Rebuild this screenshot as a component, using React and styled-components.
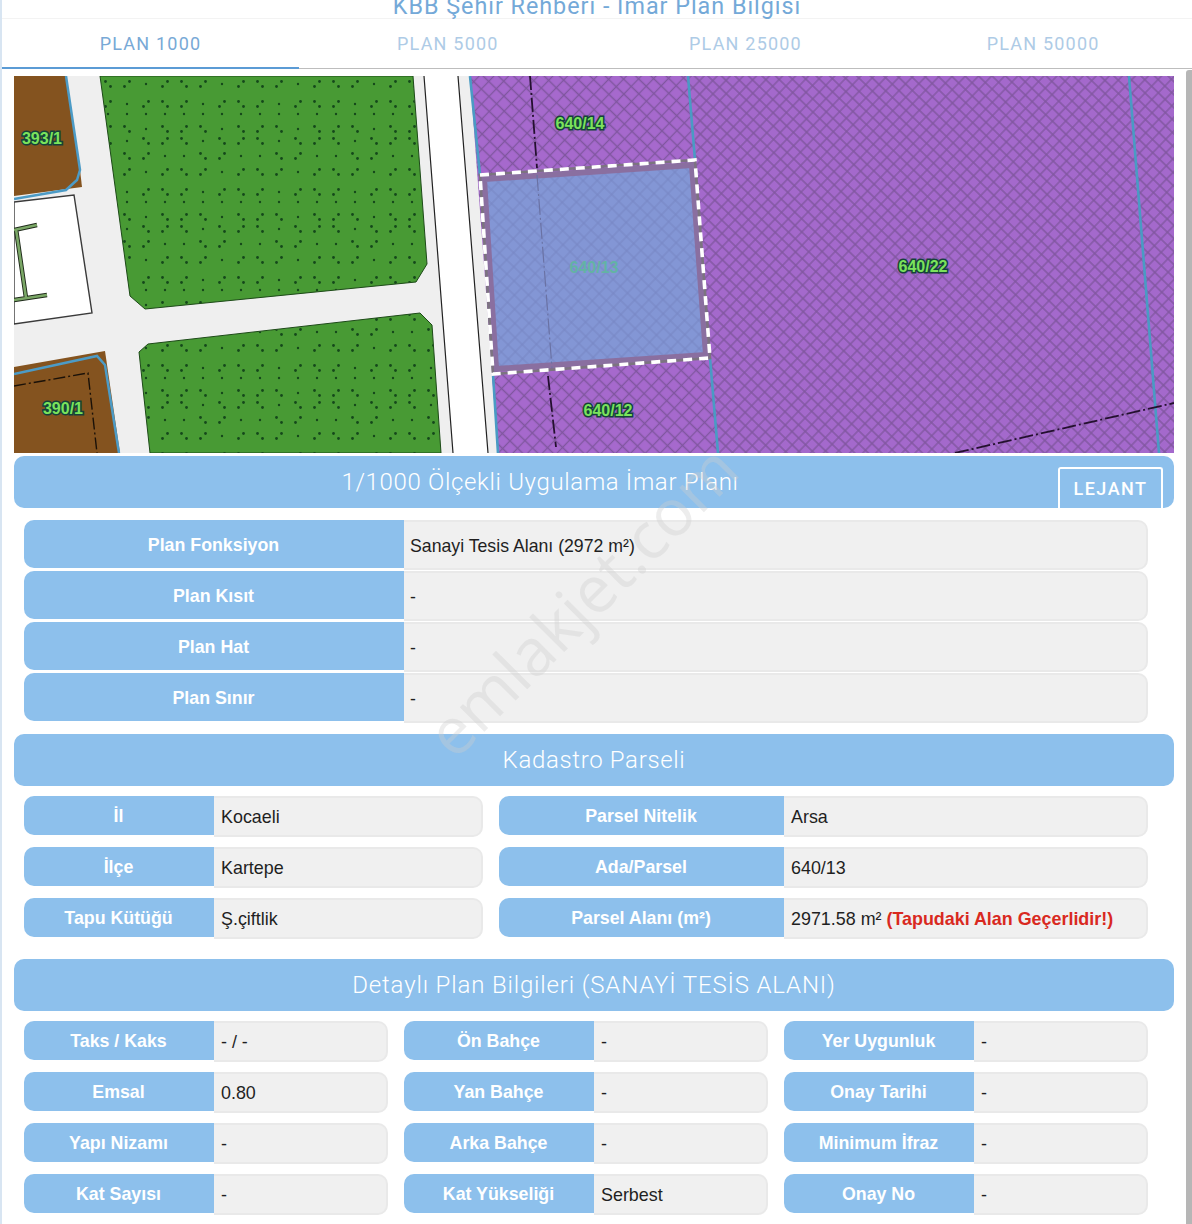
import React from 'react';
import styled, { createGlobalStyle } from 'styled-components';

const GlobalStyle = createGlobalStyle`
  html, body {
    margin: 0;
    padding: 0;
    background: #ffffff;
    overflow: hidden;
  }
`;

const Page = styled.div`
  position: relative;
  width: 1192px;
  height: 1224px;
  box-sizing: border-box;
  overflow: hidden;
  background: #ffffff;
  border-left: 2px solid #d8e5f2;
`;

const Title = styled.h1`
  margin: -7px 0 0 0;
  height: 25px;
  text-align: center;
  font: 400 23.3px/26px Roboto, sans-serif;
  letter-spacing: 1px;
  color: #74a9d8;
  border-bottom: 1px solid #f3f3f3;
  box-sizing: content-box;
`;

const Tabs = styled.div`
  display: grid;
  grid-template-columns: 297px repeat(3, 297.67px);
  height: 49px;
  border-bottom: 1px solid #bdbdbd;
`;

const Tab = styled.div`
  display: flex;
  align-items: center;
  justify-content: center;
  box-sizing: border-box;
  height: 50px;
  font: 400 18px Roboto, sans-serif;
  letter-spacing: 1.2px;
  color: ${props => (props.$active ? '#78a9d6' : '#aecbe6')};
  border-bottom: 2px solid ${props => (props.$active ? '#5b9bd5' : 'transparent')};
`;

const Content = styled.div`
  width: 1160px;
  margin: 7px 0 0 12px;
`;

const MapFrame = styled.svg`
  display: block;
  width: 1160px;
  height: 377px;
`;

const SectionHeader = styled.div`
  position: relative;
  display: flex;
  align-items: center;
  justify-content: center;
  box-sizing: border-box;
  height: 52px;
  margin-top: ${props => props.$top}px;
  padding: 0 ${props => props.$reserve || 0}px 0 0;
  border-radius: 10px;
  background: #8dc0ec;
  color: #ffffff;
  font: 300 24px Roboto, sans-serif;
  letter-spacing: ${props => props.$spacing || 0.66}px;
`;

const LegendButton = styled.div`
  position: absolute;
  right: 11px;
  bottom: 0;
  width: 105px;
  height: 41px;
  box-sizing: border-box;
  display: flex;
  align-items: center;
  justify-content: center;
  border: 2px solid #ffffff;
  border-bottom: none;
  border-radius: 3px 3px 0 0;
  font: 500 18px Roboto, sans-serif;
  letter-spacing: 1.5px;
`;

const FullRows = styled.div`
  display: flex;
  flex-direction: column;
  gap: 1px;
  width: 1124px;
  margin: 12px 0 0 10px;
`;

const Grid = styled.div`
  display: grid;
  grid-template-columns: ${props => props.$columns};
  column-gap: 16px;
  row-gap: 10px;
  width: 1124px;
  margin: 10px 0 0 10px;
`;

const Field = styled.div`
  display: flex;
  align-items: flex-start;
  height: ${props => (props.$tall ? 50 : 41)}px;
`;

const Label = styled.div`
  flex: 0 0 ${props => props.$width}px;
  height: ${props => (props.$tall ? 48 : 39)}px;
  box-sizing: border-box;
  display: flex;
  align-items: center;
  justify-content: center;
  padding: ${props => (props.$tall ? 3 : 1)}px 1px 0 0;
  border-radius: 10px 0 0 10px;
  background: #8dc0ec;
  color: #ffffff;
  font: 700 17.8px 'Liberation Sans', Arial, sans-serif;
`;

const Value = styled.div`
  flex: 1;
  height: 100%;
  box-sizing: border-box;
  display: flex;
  align-items: center;
  padding: 2px 0 0 ${props => (props.$tall ? 6 : 7)}px;
  border: 2px solid #e9e9e9;
  border-left: none;
  border-radius: 0 10px 10px 0;
  background: #f0f0f0;
  color: #1f1f1f;
  font: 400 ${props => (props.$tall ? 17.7 : 17.9)}px 'Liberation Sans', Arial, sans-serif;
  white-space: pre;
`;

const Warning = styled.strong`
  color: #d9291f;
  font-weight: 700;
`;

const Scrollbar = styled.div`
  position: absolute;
  top: 70px;
  right: 0;
  bottom: 0;
  width: 6px;
  background: #b6b6b6;
  border-radius: 3px 0 0 0;
`;

const Watermark = styled.div`
  position: absolute;
  left: 579px;
  top: 600px;
  transform: translate(-50%, -50%) rotate(-45deg);
  font: 400 65px 'Open Sans', sans-serif;
  color: rgba(205, 205, 205, 0.36);
  white-space: nowrap;
  pointer-events: none;
`;

const ParcelLabel = styled.text`
  font: 700 16px 'Liberation Sans', Arial, sans-serif;
  text-anchor: middle;
  fill: ${props => (props.$faint ? '#63b3a4' : '#7be35c')};
  stroke: ${props => (props.$faint ? 'none' : '#15423a')};
  stroke-width: 3px;
  paint-order: stroke;
`;

// agac deseni: caprazlanan ikili noktalar, arada tek noktalar
const treeRows = [8, 28, 38, 53, 65, 80];
const treeDots = [];
treeRows.forEach((y, rowIndex) => {
  for (let col = 0; col < 4; col++) {
    const x = col * 19 + 8;
    const lean = (col + rowIndex) % 2 === 0 ? 1 : -1;
    if (rowIndex === 2 || (col + rowIndex) % 3 === 2) {
      treeDots.push({ x, y, r: 1.2 });
    } else {
      treeDots.push({ x: x - 2.5, y: y - 2.5 * lean, r: 1.4 });
      treeDots.push({ x: x + 2.5, y: y + 2.5 * lean, r: 1.4 });
    }
  }
});

function PlanMap() {
  return (
    <MapFrame viewBox="14 76 1160 377" preserveAspectRatio="none">
      <defs>
        <pattern id="hatchWide" width="10.6" height="10.6" patternUnits="userSpaceOnUse" patternTransform="rotate(44)">
          <rect width="10.6" height="10.6" fill="#a669cd" />
          <path d="M0 5.3H10.6M5.3 0V10.6" stroke="#80569f" strokeWidth="1.3" />
        </pattern>
        <pattern id="hatchTight" width="9.4" height="9.4" patternUnits="userSpaceOnUse" patternTransform="rotate(44)">
          <rect width="9.4" height="9.4" fill="#a469cc" />
          <path d="M0 4.7H9.4M4.7 0V9.4" stroke="#80569f" strokeWidth="1.3" />
        </pattern>
        <pattern id="hatchParcel" width="10" height="10" patternUnits="userSpaceOnUse" patternTransform="rotate(44)">
          <rect width="10" height="10" fill="#8396d5" />
          <path d="M0 5H10M5 0V10" stroke="#7787c4" strokeWidth="1" />
        </pattern>
        <pattern id="trees" width="76" height="88" patternUnits="userSpaceOnUse" patternTransform="translate(100 76)">
          <rect width="76" height="88" fill="#489a34" />
          {treeDots.map((dot, index) => (
            <circle key={index} cx={dot.x} cy={dot.y} r={dot.r} fill="#14481a" />
          ))}
        </pattern>
      </defs>

      <rect x="14" y="76" width="1160" height="377" fill="#efefef" />

      <polygon points="14,76 66,76 80,170 82,187 14,196" fill="#84531f" />
      <polyline points="66,76 80,170 77,180 66,190 14,199" fill="none" stroke="#4c9bc6" strokeWidth="2.5" />

      <polygon points="14,202 74,195 92,313 14,324" fill="#ffffff" stroke="#3a3a3a" strokeWidth="1.4" />
      <path d="M14 230 L37 225 M16 229 L26 298 M14 300 L47 295" fill="none" stroke="#1f2a1a" strokeWidth="4.5" />
      <path d="M14 230 L37 225 M16 229 L26 298 M14 300 L47 295" fill="none" stroke="#7aa766" strokeWidth="2.6" />

      <polygon points="100,76 413,76 427,264 416,282 145,309 130,296" fill="url(#trees)" stroke="#1d4a18" strokeWidth="1" />
      <polygon points="139,352 148,344 420,313 432,325 441,453 150,453" fill="url(#trees)" stroke="#1d4a18" strokeWidth="1" />

      <polygon points="14,367 105,351 120,453 14,453" fill="#84531f" />
      <polyline points="14,374 97,356 105,365 119,453" fill="none" stroke="#4c9bc6" strokeWidth="2.5" />
      <polyline points="14,386 88,373 97,453" fill="none" stroke="#1a1108" strokeWidth="1.4" strokeDasharray="12 3 2 3" />

      <polygon points="424,76 458,76 488,453 453,453" fill="#ffffff" />
      <path d="M424 76 L453 453 M458 76 L488 453" stroke="#222222" strokeWidth="1.2" />

      <polygon points="470,76 1174,76 1174,453 498,453" fill="url(#hatchTight)" />
      <polygon points="470,76 689,76 696,160 480,175" fill="url(#hatchWide)" />
      <polygon points="492,375 711,359 718,453 498,453" fill="url(#hatchWide)" />

      <path
        d="M470 76 L480 175 M688 76 L695 160 M710 358 L718 453 M1129 76 L1159 453 M493 374 L498 453"
        fill="none"
        stroke="#4a9bc4"
        strokeWidth="2.6"
      />
      <path
        d="M530 76 L537 168 M548 376 L556 447 M955 453 L1174 403"
        fill="none"
        stroke="#24102f"
        strokeWidth="1.8"
        strokeDasharray="14 3 2 3"
      />

      <polygon points="484,179 692,165 706,355 496,369" fill="url(#hatchParcel)" stroke="#8a6fa0" strokeWidth="6" />
      <path d="M537 175 L552 368" fill="none" stroke="#6a72a4" strokeWidth="1.2" strokeDasharray="16 3 2 3" />
      <polygon points="480,175 695,160 710,358 493,374" fill="none" stroke="#7c7480" strokeWidth="2.6" />
      <polygon points="480,175 695,160 710,358 493,374" fill="none" stroke="#ffffff" strokeWidth="3.6" strokeDasharray="9 7" />

      <ParcelLabel x="42" y="144">393/1</ParcelLabel>
      <ParcelLabel x="63" y="414">390/1</ParcelLabel>
      <ParcelLabel x="580" y="129">640/14</ParcelLabel>
      <ParcelLabel x="594" y="273" $faint>640/13</ParcelLabel>
      <ParcelLabel x="923" y="272">640/22</ParcelLabel>
      <ParcelLabel x="608" y="416">640/12</ParcelLabel>
    </MapFrame>
  );
}

const planRows = [
  ['Plan Fonksiyon', 'Sanayi Tesis Alanı (2972 m²)'],
  ['Plan Kısıt', '-'],
  ['Plan Hat', '-'],
  ['Plan Sınır', '-'],
];

const parcelRows = [
  ['İl', 'Kocaeli', 190],
  ['Parsel Nitelik', 'Arsa', 285],
  ['İlçe', 'Kartepe', 190],
  ['Ada/Parsel', '640/13', 285],
  ['Tapu Kütüğü', 'Ş.çiftlik', 190],
  [
    'Parsel Alanı (m²)',
    <>2971.58 m² <Warning>(Tapudaki Alan Geçerlidir!)</Warning></>,
    285,
  ],
];

const detailRows = [
  ['Taks / Kaks', '- / -'],
  ['Ön Bahçe', '-'],
  ['Yer Uygunluk', '-'],
  ['Emsal', '0.80'],
  ['Yan Bahçe', '-'],
  ['Onay Tarihi', '-'],
  ['Yapı Nizamı', '-'],
  ['Arka Bahçe', '-'],
  ['Minimum İfraz', '-'],
  ['Kat Sayısı', '-'],
  ['Kat Yükseliği', 'Serbest'],
  ['Onay No', '-'],
];

function App() {
  return (
    <Page>
      <GlobalStyle />
      <Title>KBB Şehir Rehberi - İmar Plan Bilgisi</Title>
      <Tabs>
        <Tab $active>PLAN 1000</Tab>
        <Tab>PLAN 5000</Tab>
        <Tab>PLAN 25000</Tab>
        <Tab>PLAN 50000</Tab>
      </Tabs>
      <Content>
        <PlanMap />
        <SectionHeader $top={3} $reserve={108}>
          1/1000 Ölçekli Uygulama İmar Planı
          <LegendButton>LEJANT</LegendButton>
        </SectionHeader>
        <FullRows>
          {planRows.map(([label, value]) => (
            <Field $tall key={label}>
              <Label $tall $width={380}>{label}</Label>
              <Value $tall>{value}</Value>
            </Field>
          ))}
        </FullRows>
        <SectionHeader $top={11}>Kadastro Parseli</SectionHeader>
        <Grid $columns="459px 649px">
          {parcelRows.map(([label, value, width]) => (
            <Field key={label}>
              <Label $width={width}>{label}</Label>
              <Value>{value}</Value>
            </Field>
          ))}
        </Grid>
        <SectionHeader $top={20} $spacing={0.85}>Detaylı Plan Bilgileri (SANAYİ TESİS ALANI)</SectionHeader>
        <Grid $columns="repeat(3, 364px)">
          {detailRows.map(([label, value]) => (
            <Field key={label}>
              <Label $width={190}>{label}</Label>
              <Value>{value}</Value>
            </Field>
          ))}
        </Grid>
      </Content>
      <Watermark>emlakjet.com</Watermark>
      <Scrollbar />
    </Page>
  );
}

export default App;
